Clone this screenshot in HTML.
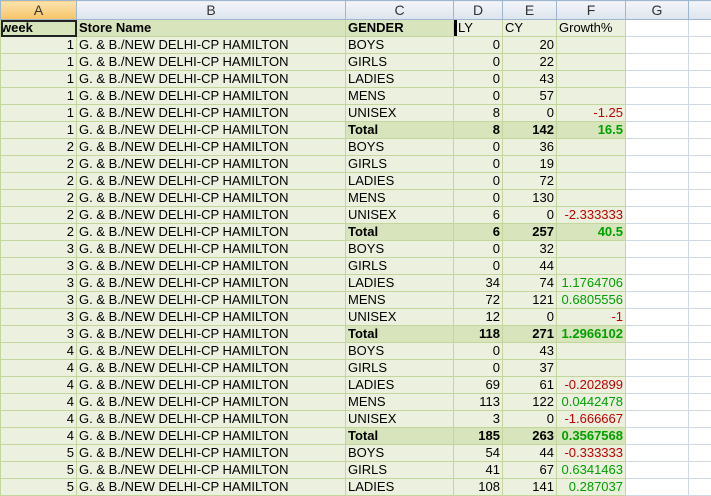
<!DOCTYPE html><html><head><style>
body{margin:0;width:711px;height:496px;overflow:hidden;background:#fff;font-family:"Liberation Sans",Arial,sans-serif;font-size:13px}
table{border-collapse:collapse;table-layout:fixed;position:absolute;left:0;top:0;width:722px}
td{height:16px;padding:0 2px;border:1px solid #c3d69b;background:#ebf1de;white-space:nowrap;overflow:hidden;line-height:16px;color:#000}
tr.h td{background:linear-gradient(#f3f5f9,#dde4ee);border-color:#9eb6ce;text-align:center;color:#333;font-size:14px;height:18px}
tr.h td.sel{background:linear-gradient(#fbe3ad,#f6c466)}
tr.hd td{background:#d8e4bc;font-weight:bold}
tr.hd td.n{font-weight:normal;background:#ebf1de}
tr.t td{background:#d8e4bc;font-weight:bold}
td.r{text-align:right}
tr td.w{background:#fff;border-color:#d0d7e5}
.red{color:#c00000}.grn{color:#00a000}
</style></head><body>
<table>
<colgroup><col style="width:76px"><col style="width:269px"><col style="width:108px"><col style="width:49px"><col style="width:54px"><col style="width:69px"><col style="width:63px"><col style="width:34px"></colgroup>
<tr class="h"><td class="sel">A</td><td>B</td><td>C</td><td>D</td><td>E</td><td>F</td><td>G</td><td></td></tr>
<tr class="hd"><td style="padding-left:0;outline:2px solid #222;outline-offset:-2px">week</td><td>Store Name</td><td>GENDER</td><td class="n" style="box-shadow:inset 3px 0 0 #000;padding-left:4px">LY</td><td class="n">CY</td><td class="n">Growth%</td><td class="w"></td><td class="w"></td></tr>
<tr><td class="r">1</td><td>G. &amp; B./NEW DELHI-CP HAMILTON</td><td>BOYS</td><td class="r">0</td><td class="r">20</td><td class="r"></td><td class="w"></td><td class="w"></td></tr>
<tr><td class="r">1</td><td>G. &amp; B./NEW DELHI-CP HAMILTON</td><td>GIRLS</td><td class="r">0</td><td class="r">22</td><td class="r"></td><td class="w"></td><td class="w"></td></tr>
<tr><td class="r">1</td><td>G. &amp; B./NEW DELHI-CP HAMILTON</td><td>LADIES</td><td class="r">0</td><td class="r">43</td><td class="r"></td><td class="w"></td><td class="w"></td></tr>
<tr><td class="r">1</td><td>G. &amp; B./NEW DELHI-CP HAMILTON</td><td>MENS</td><td class="r">0</td><td class="r">57</td><td class="r"></td><td class="w"></td><td class="w"></td></tr>
<tr><td class="r">1</td><td>G. &amp; B./NEW DELHI-CP HAMILTON</td><td>UNISEX</td><td class="r">8</td><td class="r">0</td><td class="r red">-1.25</td><td class="w"></td><td class="w"></td></tr>
<tr class="t"><td class="r" style="font-weight:normal;background:#ebf1de">1</td><td style="font-weight:normal;background:#ebf1de">G. &amp; B./NEW DELHI-CP HAMILTON</td><td>Total</td><td class="r">8</td><td class="r">142</td><td class="r grn">16.5</td><td class="w"></td><td class="w"></td></tr>
<tr><td class="r">2</td><td>G. &amp; B./NEW DELHI-CP HAMILTON</td><td>BOYS</td><td class="r">0</td><td class="r">36</td><td class="r"></td><td class="w"></td><td class="w"></td></tr>
<tr><td class="r">2</td><td>G. &amp; B./NEW DELHI-CP HAMILTON</td><td>GIRLS</td><td class="r">0</td><td class="r">19</td><td class="r"></td><td class="w"></td><td class="w"></td></tr>
<tr><td class="r">2</td><td>G. &amp; B./NEW DELHI-CP HAMILTON</td><td>LADIES</td><td class="r">0</td><td class="r">72</td><td class="r"></td><td class="w"></td><td class="w"></td></tr>
<tr><td class="r">2</td><td>G. &amp; B./NEW DELHI-CP HAMILTON</td><td>MENS</td><td class="r">0</td><td class="r">130</td><td class="r"></td><td class="w"></td><td class="w"></td></tr>
<tr><td class="r">2</td><td>G. &amp; B./NEW DELHI-CP HAMILTON</td><td>UNISEX</td><td class="r">6</td><td class="r">0</td><td class="r red">-2.333333</td><td class="w"></td><td class="w"></td></tr>
<tr class="t"><td class="r" style="font-weight:normal;background:#ebf1de">2</td><td style="font-weight:normal;background:#ebf1de">G. &amp; B./NEW DELHI-CP HAMILTON</td><td>Total</td><td class="r">6</td><td class="r">257</td><td class="r grn">40.5</td><td class="w"></td><td class="w"></td></tr>
<tr><td class="r">3</td><td>G. &amp; B./NEW DELHI-CP HAMILTON</td><td>BOYS</td><td class="r">0</td><td class="r">32</td><td class="r"></td><td class="w"></td><td class="w"></td></tr>
<tr><td class="r">3</td><td>G. &amp; B./NEW DELHI-CP HAMILTON</td><td>GIRLS</td><td class="r">0</td><td class="r">44</td><td class="r"></td><td class="w"></td><td class="w"></td></tr>
<tr><td class="r">3</td><td>G. &amp; B./NEW DELHI-CP HAMILTON</td><td>LADIES</td><td class="r">34</td><td class="r">74</td><td class="r grn">1.1764706</td><td class="w"></td><td class="w"></td></tr>
<tr><td class="r">3</td><td>G. &amp; B./NEW DELHI-CP HAMILTON</td><td>MENS</td><td class="r">72</td><td class="r">121</td><td class="r grn">0.6805556</td><td class="w"></td><td class="w"></td></tr>
<tr><td class="r">3</td><td>G. &amp; B./NEW DELHI-CP HAMILTON</td><td>UNISEX</td><td class="r">12</td><td class="r">0</td><td class="r red">-1</td><td class="w"></td><td class="w"></td></tr>
<tr class="t"><td class="r" style="font-weight:normal;background:#ebf1de">3</td><td style="font-weight:normal;background:#ebf1de">G. &amp; B./NEW DELHI-CP HAMILTON</td><td>Total</td><td class="r">118</td><td class="r">271</td><td class="r grn">1.2966102</td><td class="w"></td><td class="w"></td></tr>
<tr><td class="r">4</td><td>G. &amp; B./NEW DELHI-CP HAMILTON</td><td>BOYS</td><td class="r">0</td><td class="r">43</td><td class="r"></td><td class="w"></td><td class="w"></td></tr>
<tr><td class="r">4</td><td>G. &amp; B./NEW DELHI-CP HAMILTON</td><td>GIRLS</td><td class="r">0</td><td class="r">37</td><td class="r"></td><td class="w"></td><td class="w"></td></tr>
<tr><td class="r">4</td><td>G. &amp; B./NEW DELHI-CP HAMILTON</td><td>LADIES</td><td class="r">69</td><td class="r">61</td><td class="r red">-0.202899</td><td class="w"></td><td class="w"></td></tr>
<tr><td class="r">4</td><td>G. &amp; B./NEW DELHI-CP HAMILTON</td><td>MENS</td><td class="r">113</td><td class="r">122</td><td class="r grn">0.0442478</td><td class="w"></td><td class="w"></td></tr>
<tr><td class="r">4</td><td>G. &amp; B./NEW DELHI-CP HAMILTON</td><td>UNISEX</td><td class="r">3</td><td class="r">0</td><td class="r red">-1.666667</td><td class="w"></td><td class="w"></td></tr>
<tr class="t"><td class="r" style="font-weight:normal;background:#ebf1de">4</td><td style="font-weight:normal;background:#ebf1de">G. &amp; B./NEW DELHI-CP HAMILTON</td><td>Total</td><td class="r">185</td><td class="r">263</td><td class="r grn">0.3567568</td><td class="w"></td><td class="w"></td></tr>
<tr><td class="r">5</td><td>G. &amp; B./NEW DELHI-CP HAMILTON</td><td>BOYS</td><td class="r">54</td><td class="r">44</td><td class="r red">-0.333333</td><td class="w"></td><td class="w"></td></tr>
<tr><td class="r">5</td><td>G. &amp; B./NEW DELHI-CP HAMILTON</td><td>GIRLS</td><td class="r">41</td><td class="r">67</td><td class="r grn">0.6341463</td><td class="w"></td><td class="w"></td></tr>
<tr><td class="r">5</td><td>G. &amp; B./NEW DELHI-CP HAMILTON</td><td>LADIES</td><td class="r">108</td><td class="r">141</td><td class="r grn">0.287037</td><td class="w"></td><td class="w"></td></tr>
</table>
</body></html>
